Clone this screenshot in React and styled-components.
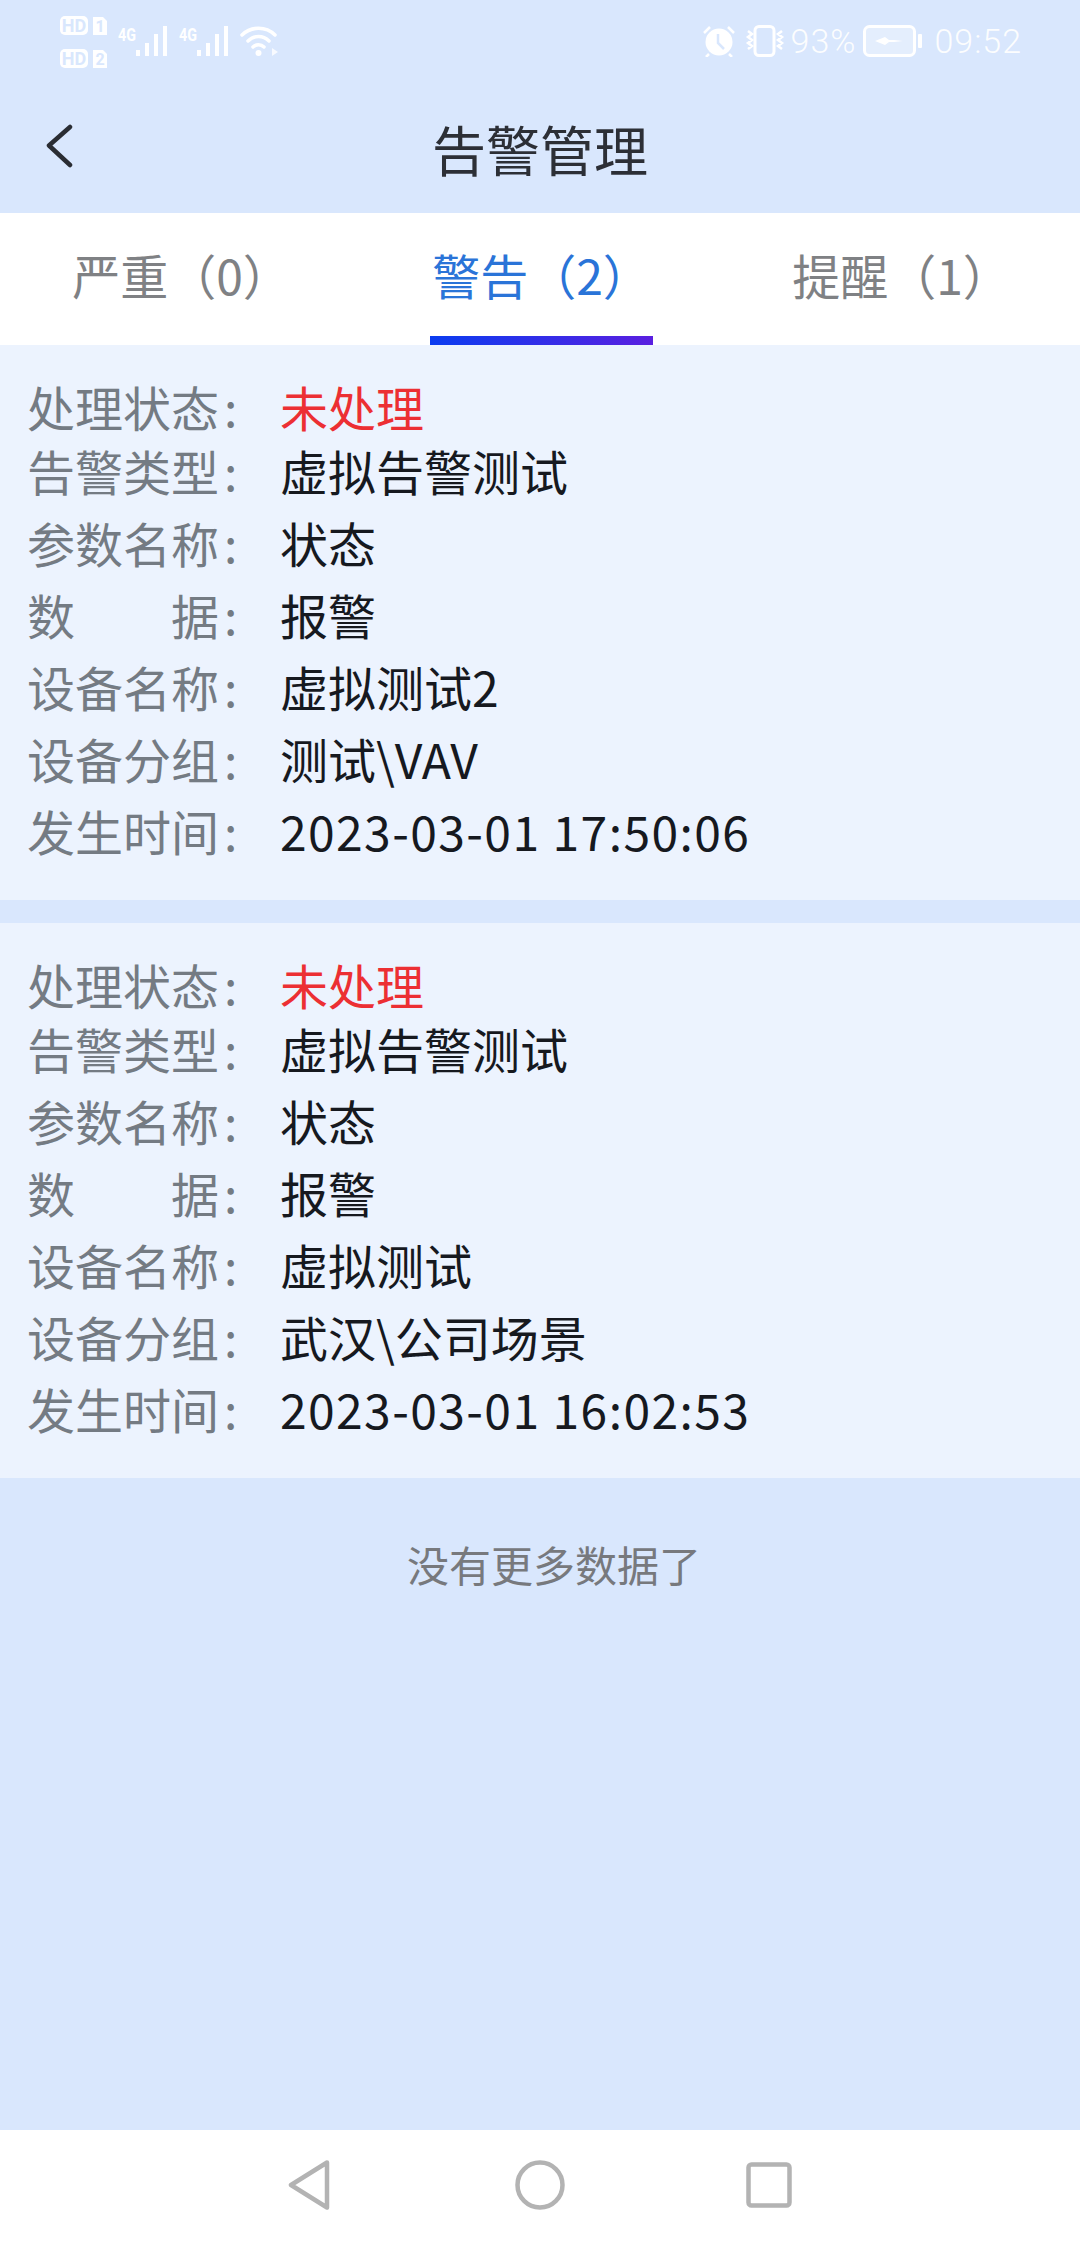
import React from "react";
import styled, { createGlobalStyle } from "styled-components";

const CJK = '"Noto Sans CJK SC", "Noto Sans", sans-serif';

const Global = createGlobalStyle`
  html, body { margin: 0; padding: 0; background: #d9e7fd; }
  * { box-sizing: border-box; }
`;

const Screen = styled.div`
  width: 1080px;
  height: 2244px;
  display: flex;
  flex-direction: column;
  background: #d9e7fd;
  font-family: ${CJK};
  overflow: hidden;
`;

const Header = styled.header`
  height: 213px;
  flex: none;
  display: flex;
  flex-direction: column;
`;

const StatusBar = styled.div`
  height: 80px;
  padding: 12px 58px 0 60px;
  display: flex;
  align-items: flex-start;
  justify-content: space-between;
  color: #fff;
`;

const StatusGroup = styled.div`
  display: flex;
  align-items: center;
  height: 58px;
`;

const StatusText = styled.span`
  font-family: "Roboto", sans-serif;
  font-size: 34px;
  font-weight: 300;
  letter-spacing: 1px;
  color: #fff;
  opacity: 0.92;
  margin: ${(p) => p.$margin || "0"};
`;

const SvgIcon = styled.svg`
  display: block;
  flex: none;
  margin: ${(p) => p.$margin || "0"};
`;

const TitleBar = styled.div`
  flex: 1;
  display: grid;
  grid-template-columns: 1fr auto 1fr;
  align-items: center;
  padding-top: 4px;
`;

const BackIcon = styled.svg`
  display: block;
  margin: 0 0 5px 46px;
`;

const Title = styled.h1`
  margin: 0;
  font-size: 54px;
  font-weight: 400;
  color: #2c2f36;
`;

const Tabs = styled.nav`
  height: 132px;
  flex: none;
  background: #fff;
  display: grid;
  grid-template-columns: repeat(3, 1fr);
`;

const Tab = styled.div`
  display: flex;
  justify-content: center;
  padding-left: 3px;
`;

const TabLabel = styled.span`
  height: 132px;
  padding: 0 2px;
  line-height: 122px;
  font-size: 48px;
  color: ${(p) => (p.$active ? "#2a74d8" : "#7f8184")};
  position: relative;
  &::after {
    content: "";
    display: ${(p) => (p.$active ? "block" : "none")};
    position: absolute;
    left: 0;
    right: 0;
    bottom: 0;
    height: 9px;
    background: linear-gradient(90deg, #0a3cf0, #5a1fe0);
  }
`;

const Card = styled.section`
  flex: none;
  background: #ecf3fe;
  padding: 29px 27px 34px;
  margin-bottom: 23px;
`;

const Row = styled.div`
  display: flex;
  align-items: center;
  height: 72px;
  &:first-child {
    height: 60px;
    padding-top: 4px;
  }
`;

const Term = styled.span`
  width: 192px;
  flex: none;
  font-size: 48px;
  color: #747b83;
  text-align-last: justify;
`;

const Colon = styled.span`
  width: 61px;
  flex: none;
  padding-left: 5px;
  font-size: 48px;
  color: #747b83;
`;

const Value = styled.span`
  font-size: 48px;
  color: ${(p) => (p.$alert ? "#ec2f33" : "#16191f")};
  letter-spacing: ${(p) => (p.$num ? "1.4px" : "0")};
`;

const NoMore = styled.div`
  margin-top: 21px;
  text-align: center;
  font-size: 42px;
  color: #77797d;
  padding-left: 28px;
  line-height: 84px;
`;

const Spacer = styled.div`
  flex: 1;
`;

const NavBar = styled.footer`
  height: 114px;
  flex: none;
  background: #fff;
  display: flex;
  align-items: center;
  justify-content: center;
  gap: 181px;
  padding: 0 0 5px 0;
`;

const records = [
  [
    ["虚拟告警测试"],
    ["状态"],
    ["报警"],
    ["虚拟测试2"],
    ["测试\\VAV"],
    ["2023-03-01 17:50:06", true],
  ],
  [
    ["虚拟告警测试"],
    ["状态"],
    ["报警"],
    ["虚拟测试"],
    ["武汉\\公司场景"],
    ["2023-03-01 16:02:53", true],
  ],
];

const terms = ["告警类型", "参数名称", "数据", "设备名称", "设备分组", "发生时间"];

const HdBadge = ({ y, n }) => (
  <g>
    <rect x="0" y={y} width="28" height="19" rx="5" fill="#fff" />
    <text x="14" y={y + 15.5} fontSize="18" fontWeight="700" textAnchor="middle" fontFamily="Roboto" fill="#d9e7fd">HD</text>
    <path d={`M33 ${y + 1}h10l4 4v14h-14z`} fill="#fff" />
    <text x="40" y={y + 15.5} fontSize="16" fontWeight="700" textAnchor="middle" fontFamily="Roboto" fill="#d9e7fd">{n}</text>
  </g>
);

const Signal = () => (
  <SvgIcon width="50" height="34" viewBox="0 0 50 34" $margin="0 11px 0 0">
    <text x="0" y="17" fontSize="18" fontWeight="700" fontFamily="Roboto" fill="#fff" textLength="18" lengthAdjust="spacingAndGlyphs">4G</text>
    <g fill="#fff">
      <rect x="18" y="26" width="4" height="6" />
      <rect x="27" y="19" width="4" height="13" />
      <rect x="36" y="10" width="4" height="22" />
      <rect x="45" y="2" width="4" height="30" />
    </g>
  </SvgIcon>
);

export default function App() {
  return (
    <Screen>
      <Global />
      <Header>
        <StatusBar>
          <StatusGroup>
            <SvgIcon width="48" height="54" viewBox="0 0 48 54" $margin="0 10px 0 0">
              <HdBadge y={2} n="1" />
              <HdBadge y={35} n="2" />
            </SvgIcon>
            <Signal />
            <Signal />
            <SvgIcon width="40" height="32" viewBox="0 0 40 32">
              <g fill="none" stroke="#fff" strokeWidth="3.5" strokeLinecap="round">
                <path d="M2 10C11 1 26 1 35 10" />
                <path d="M8 16C14 10 23 10 29 16" />
                <path d="M13 22C16 19 21 19 24 22" />
              </g>
              <circle cx="18.5" cy="28" r="3" fill="#fff" />
              <path d="M32 23l6 4-6 4z" fill="#fff" opacity="0.8" />
            </SvgIcon>
          </StatusGroup>
          <StatusGroup>
            <SvgIcon width="34" height="32" viewBox="0 0 34 32" $margin="0 9px 0 0">
              <circle cx="17" cy="17" r="13.5" fill="#fff" />
              <path d="M16 9v9l6 6" fill="none" stroke="#d9e7fd" strokeWidth="2.5" />
              <path d="M2 8L8 2M32 8L26 2M7 29l-3 3M27 29l3 3" stroke="#fff" strokeWidth="2.5" />
            </SvgIcon>
            <SvgIcon width="40" height="32" viewBox="0 0 40 32" $margin="0 6px 0 0">
              <rect x="10" y="1.5" width="19" height="29" rx="4" fill="none" stroke="#fff" strokeWidth="3" />
              <path d="M3 6l4 3-4 3 4 3-4 3 4 3-4 3M37 6l-4 3 4 3-4 3 4 3-4 3 4 3" fill="none" stroke="#fff" strokeWidth="2.5" />
            </SvgIcon>
            <StatusText $margin="0 7px 0 0">93%</StatusText>
            <SvgIcon width="60" height="32" viewBox="0 0 60 32" $margin="0 11px 0 0">
              <rect x="1.5" y="1.5" width="50" height="29" rx="5" fill="#fff" fillOpacity="0.3" stroke="#fff" strokeWidth="3" />
              <path d="M12 16l10-4 4 3h5l9 1-9 1h-5l-4 3z" fill="#fff" />
              <rect x="55" y="9" width="4" height="14" rx="1" fill="#fff" />
            </SvgIcon>
            <StatusText>09:52</StatusText>
          </StatusGroup>
        </StatusBar>
        <TitleBar>
          <BackIcon width="30" height="46" viewBox="0 0 30 46" fill="none">
            <path d="M24 4L3 22.5 24 42" stroke="#2a2d33" strokeWidth="4.5" strokeLinecap="round" strokeLinejoin="round" />
          </BackIcon>
          <Title>告警管理</Title>
        </TitleBar>
      </Header>
      <Tabs>
        <Tab><TabLabel>严重（0）</TabLabel></Tab>
        <Tab><TabLabel $active>警告（2）</TabLabel></Tab>
        <Tab><TabLabel>提醒（1）</TabLabel></Tab>
      </Tabs>
      {records.map((rec, i) => (
        <Card key={i}>
          <Row>
            <Term>处理状态</Term>
            <Colon>:</Colon>
            <Value $alert>未处理</Value>
          </Row>
          {rec.map(([value, num], j) => (
            <Row key={j}>
              <Term>{terms[j]}</Term>
              <Colon>:</Colon>
              <Value $num={num}>{value}</Value>
            </Row>
          ))}
        </Card>
      ))}
      <NoMore>没有更多数据了</NoMore>
      <Spacer />
      <NavBar>
        <SvgIcon width="46" height="52" viewBox="0 0 46 52" fill="none">
          <path d="M39 3.5L3 26 39 48.5z" stroke="#b3b3b3" strokeWidth="4.5" strokeLinejoin="round" />
        </SvgIcon>
        <SvgIcon width="50" height="50" viewBox="0 0 50 50" fill="none">
          <circle cx="25" cy="25" r="22.5" stroke="#b3b3b3" strokeWidth="4.5" />
        </SvgIcon>
        <SvgIcon width="46" height="46" viewBox="0 0 46 46" fill="none">
          <rect x="2.5" y="2.5" width="41" height="41" rx="3" stroke="#b3b3b3" strokeWidth="4.5" />
        </SvgIcon>
      </NavBar>
    </Screen>
  );
}
